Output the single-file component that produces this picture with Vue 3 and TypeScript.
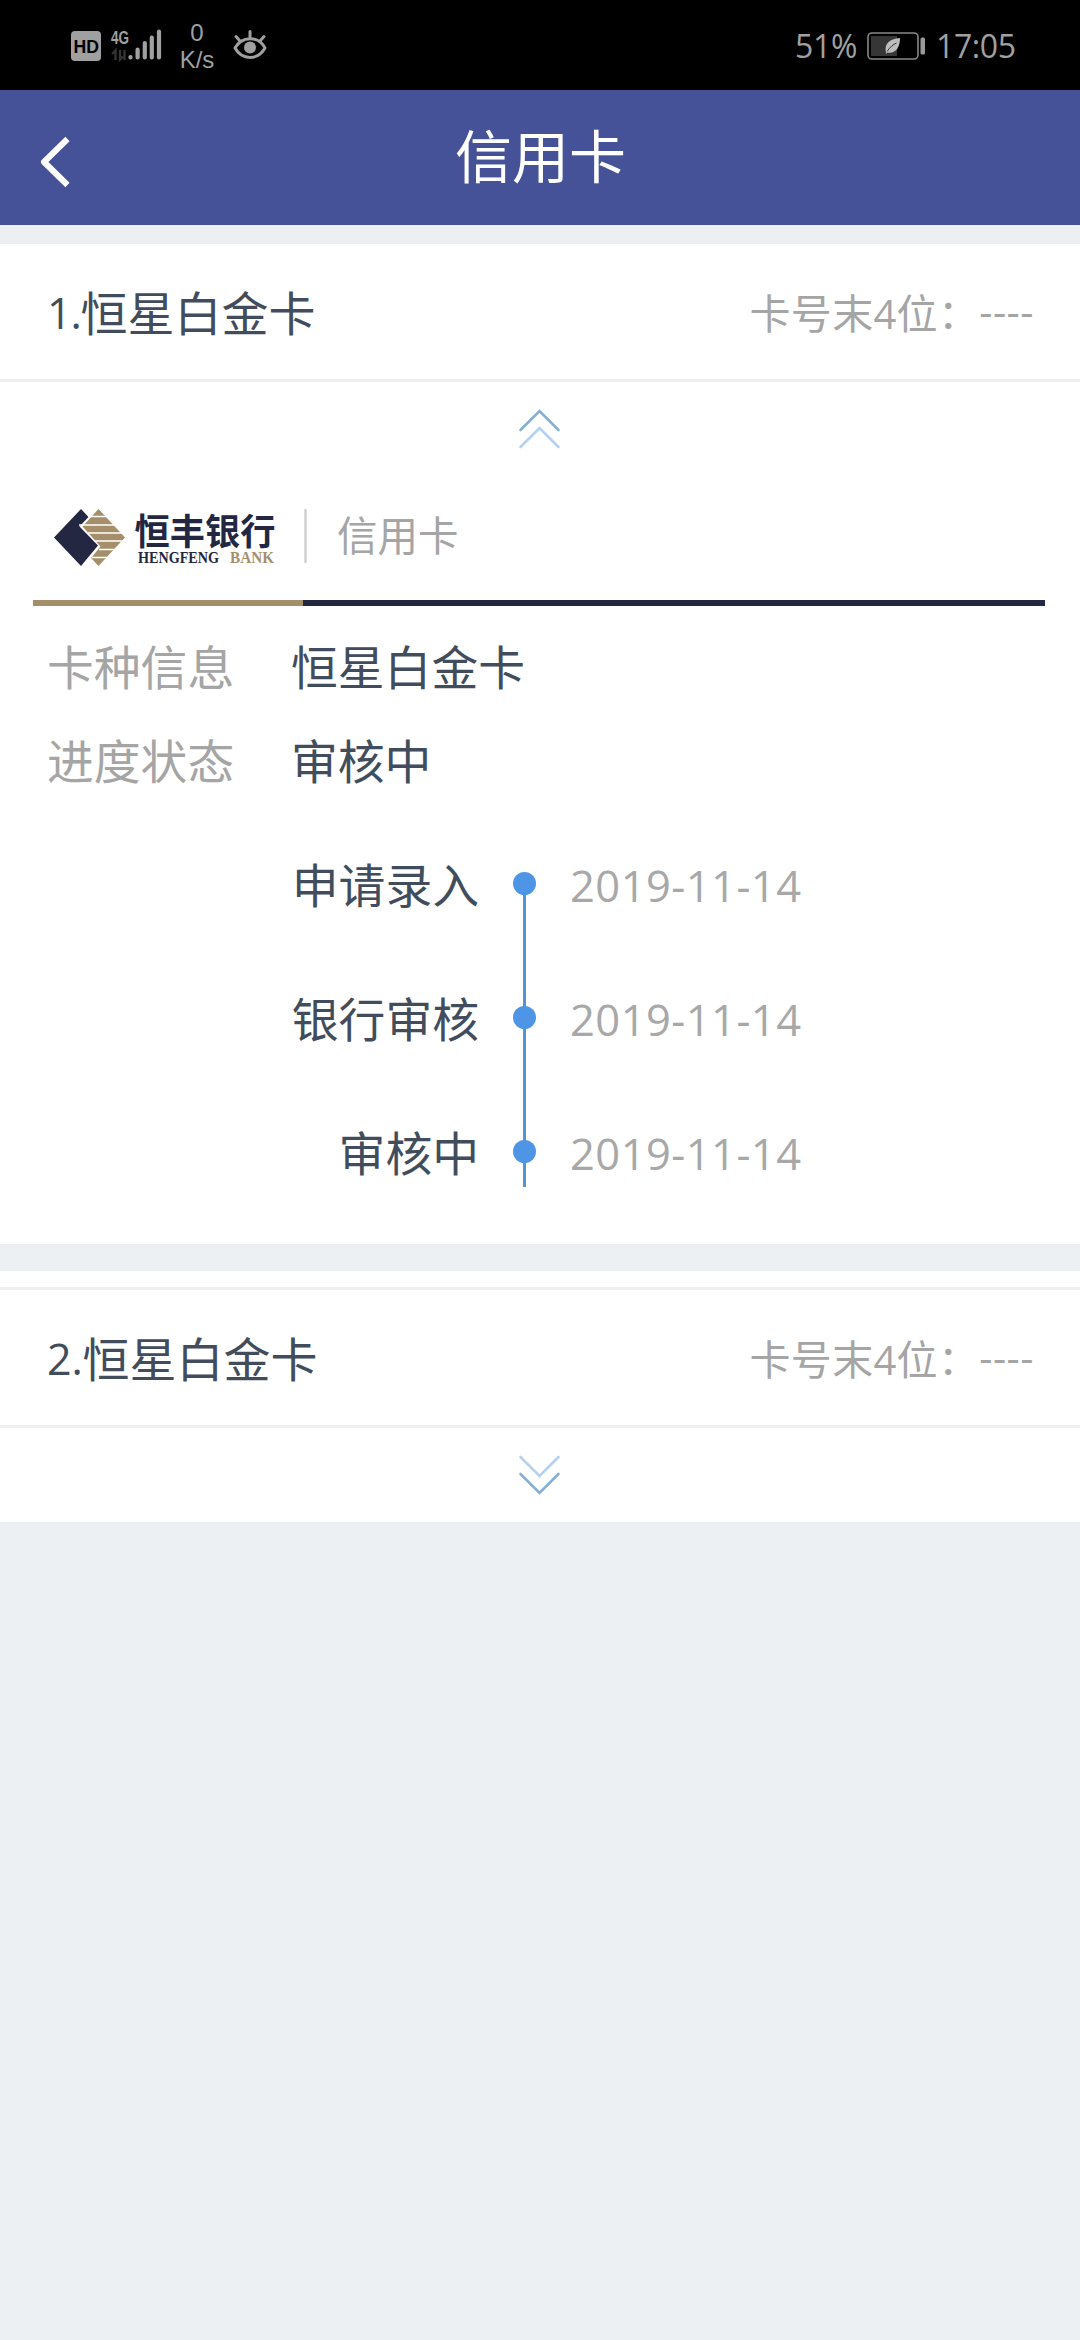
<script setup lang="ts">
interface Step {
  label: string
  date: string
}

interface CardApplication {
  index: number
  name: string
  tail: string
  status: string
  expanded: boolean
  steps: Step[]
}

const cards: CardApplication[] = [
  {
    index: 1,
    name: '恒星白金卡',
    tail: '----',
    status: '审核中',
    expanded: true,
    steps: [
      { label: '申请录入', date: '2019-11-14' },
      { label: '银行审核', date: '2019-11-14' },
      { label: '审核中', date: '2019-11-14' },
    ],
  },
  { index: 2, name: '恒星白金卡', tail: '----', status: '审核中', expanded: false, steps: [] },
]
</script>

<template>
  <div class="screen">
    <div class="status-bar">
      <div class="status-left">
        <svg class="hd" width="30" height="30" viewBox="0 0 30 30">
          <rect width="30" height="30" rx="4" fill="#a0a0a0" />
          <text class="hd-text" x="2.500" y="21.500" textLength="25.500" lengthAdjust="spacingAndGlyphs">HD</text>
        </svg>
        <svg class="signal" width="52" height="32" viewBox="0 0 52 32">
          <text class="net-text" x="1" y="14.500" textLength="18" lengthAdjust="spacingAndGlyphs">4G</text>
          <path d="M2 25l3.500-3.500v9.500M10 21v9.500l3-3M14.500 21v10" fill="none" stroke="#333" stroke-width="2.400" />
          <g stroke="#a0a0a0" stroke-width="4.200" stroke-linecap="round">
            <path d="M20.500 28v.5M27.600 20.500v8M34.800 14v14.500M41.800 8.500v20M49 2.500v26" />
          </g>
        </svg>
        <div class="speed"><span>0</span><span>K/s</span></div>
        <svg class="eye" width="34" height="30" viewBox="0 0 34 30">
          <g fill="none" stroke="#a0a0a0" stroke-width="3" stroke-linecap="round">
            <path d="M2 18C9 5.500 25 5.500 32 18C25 30.500 9 30.500 2 18Z" stroke-linejoin="round" />
            <path d="M17 1.500V7M3 6.500l4 4.500M31 6.500l-4 4.500" />
          </g>
          <circle cx="17" cy="17.500" r="6" fill="#a0a0a0" />
        </svg>
      </div>
      <div class="status-right">
        <span class="percent">51%</span>
        <svg class="battery" width="59" height="28" viewBox="0 0 59 28">
          <rect x="1" y="1" width="50" height="26" rx="4" fill="none" stroke="#888" stroke-width="1.600" />
          <rect x="4" y="4" width="26" height="20" fill="#363636" />
          <path d="M19 21C17 12 22 7 33 6C33 15 29 22 20.500 20.500L19 22Z" fill="#bdbdbd" />
          <path d="M20 19.500C23 15 26 12.500 29.500 11" fill="none" stroke="#363636" stroke-width="1" />
          <rect x="53.500" y="5.500" width="4.500" height="17" rx="1.500" fill="#999" />
        </svg>
        <span class="clock">17:05</span>
      </div>
    </div>

    <header class="nav">
      <svg class="back" width="32" height="52" viewBox="0 0 32 52">
        <path d="M27.500 3L4 26L27.500 49" fill="none" stroke="#fff" stroke-width="6" stroke-linejoin="round" />
      </svg>
      <h1>信用卡</h1>
      <span class="nav-end"></span>
    </header>

    <main>
      <section v-for="card in cards" :key="card.index" class="card" :class="{ open: card.expanded }">
        <div class="card-head">
          <span class="card-name"><span class="num">{{ card.index }}.</span>{{ card.name }}</span>
          <span class="card-tail"><span class="tail-label">卡号末<span class="four">4</span>位：</span><span class="dashes">{{ card.tail }}</span></span>
        </div>
        <div class="toggle">
          <svg width="41" height="40" viewBox="0 0 41 40" :class="{ down: !card.expanded }">
            <g fill="none" stroke-width="2.600" stroke-linecap="round">
              <path d="M1.500 21L20.500 2L39.500 21" stroke="#83afd8" />
              <path d="M1.500 38L20.500 19L39.500 38" stroke="#b4d2ef" />
            </g>
          </svg>
        </div>

        <template v-if="card.expanded">
          <div class="brand">
            <svg width="254" height="60" viewBox="0 0 254 60">
              <path d="M27 1L34.500 9L25.500 18.500L44 37.500L27 58L0 29.500Z" fill="#232742" />
              <path d="M44.500 1L71 29.500L44.500 58L37 50L46.500 38.500L28.500 18.500Z" fill="#a58f6b" />
              <path d="M34 8.500H56M25 17H62M34 25H70M40 33H70M45 41.500H64M38 49.500H56" stroke="#fff" stroke-width="1.600" />
              <text class="bank-cn" x="80.500" y="36.500" textLength="141" lengthAdjust="spacingAndGlyphs">恒丰银行</text>
              <text class="bank-en" x="84" y="54.500" textLength="81" lengthAdjust="spacingAndGlyphs" fill="#232742">HENGFENG</text>
              <text class="bank-en" x="176" y="54.500" textLength="44" lengthAdjust="spacingAndGlyphs" fill="#a58f6b">BANK</text>
              <path d="M251.500 1V55" stroke="#d2d2d2" stroke-width="2.600" />
            </svg>
            <span class="brand-type">信用卡</span>
          </div>
          <div class="rule"><span></span></div>

          <dl class="info">
            <div><dt>卡种信息</dt><dd>{{ card.name }}</dd></div>
            <div><dt>进度状态</dt><dd>{{ card.status }}</dd></div>
          </dl>

          <ol class="timeline">
            <li v-for="step in card.steps" :key="step.label">
              <span class="step-label">{{ step.label }}</span>
              <span class="track"><i></i></span>
              <span class="step-date">{{ step.date }}</span>
            </li>
          </ol>
        </template>
      </section>
    </main>
  </div>
</template>

<style>
body {
  margin: 0;
  background: #edf0f2;
}
</style>

<style scoped>
.screen {
  width: 1080px;
  height: 2340px;
  overflow: hidden;
  background: #edf0f2;
  font-family: "Open Sans", "Noto Sans CJK SC", sans-serif;
  font-weight: 400;
  color: #414d5c;
}

svg {
  display: block;
  flex: none;
  overflow: visible;
}

.status-bar {
  height: 90px;
  background: #000;
  color: #a0a0a0;
  display: flex;
  justify-content: space-between;
  box-sizing: border-box;
  padding: 0 67px 0 71px;
}

.status-left,
.status-right {
  display: flex;
  align-items: center;
}

.hd {
  margin-top: 2px;
}

.hd-text {
  font: 700 19px "Liberation Sans", sans-serif;
  fill: #000;
}

.net-text {
  font: 700 19px "Liberation Sans", sans-serif;
  fill: #a0a0a0;
}

.signal {
  margin-left: 9px;
}

.speed {
  width: 36px;
  margin-left: 17px;
  display: flex;
  flex-direction: column;
  align-items: center;
  font: 400 24px/27px "Liberation Sans", sans-serif;
  padding-top: 2px;
}

.eye {
  margin-left: 18px;
}

.percent,
.clock {
  font-size: 32px;
  line-height: 90px;
  padding-top: 1px;
  white-space: nowrap;
}

.percent {
  width: 72px;
  letter-spacing: -0.300px;
}

.battery {
  margin-top: 1px;
}

.clock {
  width: 77px;
  margin-left: 10px;
  letter-spacing: -0.400px;
}

.nav {
  height: 135px;
  background: #455298;
  display: flex;
  align-items: center;
  justify-content: space-between;
}

.back {
  width: 32px;
  margin-left: 40px;
  margin-top: 9px;
}

.nav h1 {
  margin: 0 0 3px;
  color: #fff;
  font-size: 57px;
  line-height: 132px;
  font-weight: 400;
}

.nav-end {
  width: 71px;
}

.card {
  background: #fff;
}

.card.open {
  margin-top: 19px;
  height: 1000px;
}

.card:not(.open) {
  margin-top: 27px;
  padding-top: 16px;
  height: 235px;
}

.card:not(.open) .card-head {
  border-top: 3px solid #eeefef;
}

.card-head {
  height: 135px;
  border-bottom: 3px solid #eeefef;
  display: flex;
  justify-content: space-between;
  align-items: center;
  padding: 0 46px 0 47px;
}

.card-name {
  display: flex;
  align-items: center;
  font-size: 47px;
  line-height: 70px;
  padding-top: 2px;
}

.num {
  font-size: 43px;
  letter-spacing: -1.200px;
}

.card:not(.open) .num {
  letter-spacing: -0.200px;
}

.card-tail {
  display: flex;
  align-items: center;
  color: #a5a5a5;
  font-size: 41px;
  line-height: 60px;
  padding-top: 3px;
}

.tail-label {
  letter-spacing: 0.300px;
}

.four {
  font-size: 40px;
}

.dashes {
  letter-spacing: 0.500px;
  padding-bottom: 6px;
}

.toggle {
  height: 64px;
  padding: 27px 2px 0 0;
  box-sizing: border-box;
  display: flex;
  justify-content: center;
}

.down {
  transform: rotate(180deg);
}

.brand {
  display: flex;
  height: 60px;
  margin: 62px 0 0 54px;
}

.bank-cn {
  font: 700 36px "Noto Sans CJK SC", sans-serif;
  fill: #232742;
}

.bank-en {
  font: 700 16px "Liberation Serif", serif;
}

.brand-type {
  font-size: 40.500px;
  line-height: 55px;
  margin-left: 29px;
  color: #a5a5a5;
}

.rule {
  height: 6px;
  margin: 32px 35px 0 33px;
  background: #232742;
  display: flex;
}

.rule span {
  width: 270px;
  background: #a58f6b;
}

.info {
  margin: 14px 0 0 47px;
  font-size: 46.800px;
  line-height: 94px;
}

.info div {
  display: flex;
}

.info dt {
  width: 244px;
  color: #a5a5a5;
}

.info dd {
  margin: 0;
}

.timeline {
  margin: 10px 0 0;
  padding: 0;
  list-style: none;
}

.timeline li {
  display: flex;
  height: 134px;
}

.step-label {
  width: 479px;
  text-align: right;
  font-size: 46.800px;
  line-height: 134px;
}

.track {
  width: 91px;
  display: flex;
  justify-content: center;
  background: linear-gradient(#5594d4, #5594d4) 44px 0 / 3px 100% no-repeat;
}

.timeline li:first-child .track {
  background-position: 44px 65px;
}

.timeline li:last-child .track {
  background-size: 3px 101px;
}

.track i {
  width: 23px;
  height: 23px;
  border-radius: 50%;
  background: #4f95e6;
  margin: 54px 0 0;
}

.step-date {
  font-size: 43.500px;
  letter-spacing: 0.450px;
  line-height: 136px;
  color: #a8a8a8;
}
</style>
